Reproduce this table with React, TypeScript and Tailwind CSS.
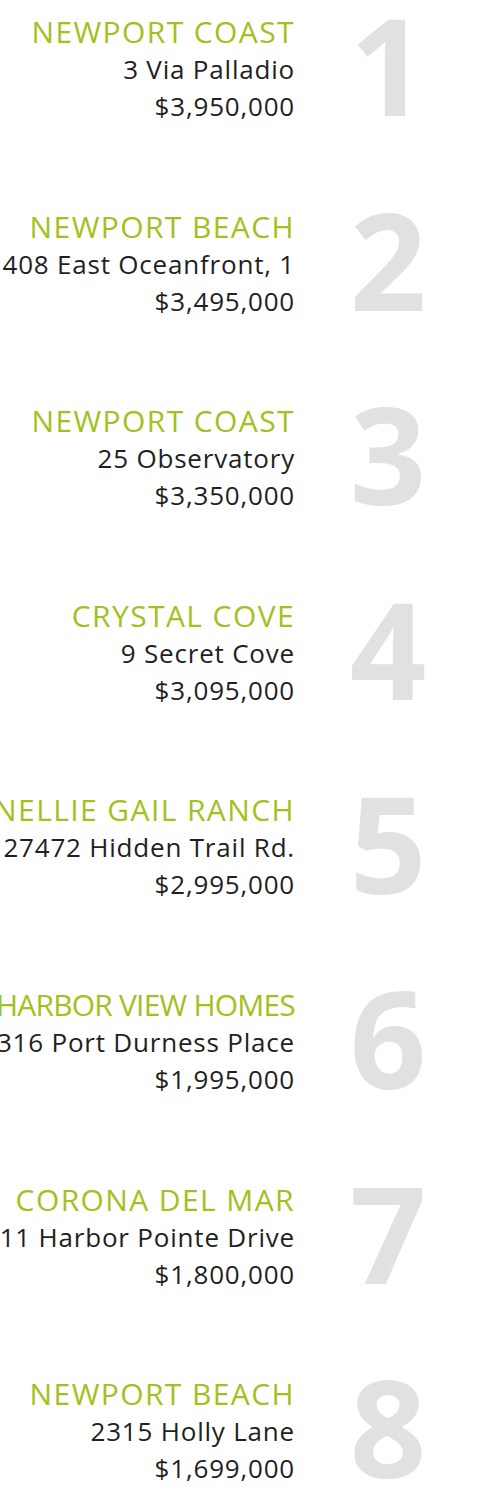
import React from "react";

const listings = [
  { n: "1", area: "NEWPORT COAST", address: "3 Via Palladio", price: "$3,950,000" },
  { n: "2", area: "NEWPORT BEACH", address: "408 East Oceanfront, 1", price: "$3,495,000" },
  { n: "3", area: "NEWPORT COAST", address: "25 Observatory", price: "$3,350,000" },
  { n: "4", area: "CRYSTAL COVE", address: "9 Secret Cove", price: "$3,095,000" },
  { n: "5", area: "NELLIE GAIL RANCH", address: "27472 Hidden Trail Rd.", price: "$2,995,000" },
  { n: "6", area: "HARBOR VIEW HOMES", address: "2316 Port Durness Place", price: "$1,995,000", tight: true },
  { n: "7", area: "CORONA DEL MAR", address: "11 Harbor Pointe Drive", price: "$1,800,000" },
  { n: "8", area: "NEWPORT BEACH", address: "2315 Holly Lane", price: "$1,699,000" },
];

const App = () => {
  return (
    <div className="w-full overflow-hidden bg-white font-['Open_Sans',sans-serif]">
      {listings.map((l) => (
        <div key={l.n} className="flex h-[194.6px] items-start">
          {/* address block, right aligned, spills off the left edge */}
          <div className="flex w-[295px] shrink-0 flex-col items-end pt-[12px] whitespace-nowrap">
            <div
              className={
                l.tight
                  ? "text-[30px] leading-[39px] tracking-[-0.8px] text-[#a2c11c]"
                  : "text-[30px] leading-[39px] tracking-[1.4px] text-[#a2c11c]"
              }
            >
              {l.area}
            </div>
            <div className="text-[26px] leading-[37px] tracking-[0.8px] text-[#231f20]">{l.address}</div>
            <div className="text-[26px] leading-[37px] tracking-[0.8px] text-[#231f20]">{l.price}</div>
          </div>
          {/* big rank number */}
          <div className="ml-[50px] mt-[4px] w-[86px] shrink-0 text-center text-[134px] font-bold leading-[120px] text-[#e1e1e1]">
            {l.n}
          </div>
        </div>
      ))}
    </div>
  );
};

export default App;
